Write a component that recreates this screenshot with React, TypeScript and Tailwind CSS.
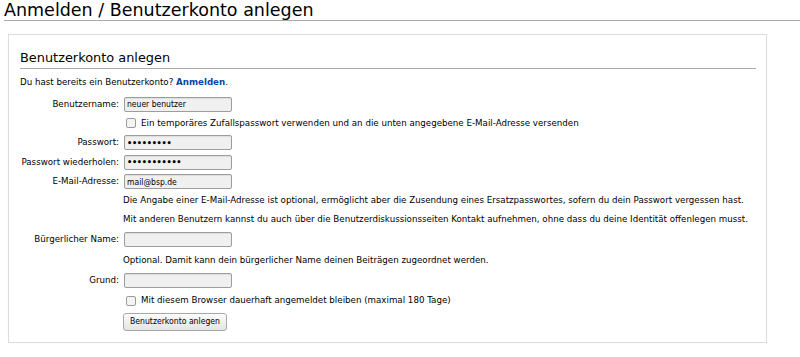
import React from "react";

const font = { fontFamily: '"DejaVu Sans", Verdana, sans-serif' };

function Label({ children }: { children?: React.ReactNode }) {
  return <div className="w-[99px] shrink-0 text-right pr-0 leading-[11px]">{children}</div>;
}

function Input({ value, password }: { value?: string; password?: boolean }) {
  return (
    <div className="ml-[5px] w-[108px] h-[15px] border border-[#9d9d9d] rounded-[2px] bg-[#f0f0f0] flex items-center pl-[2px] overflow-hidden shadow-[inset_0_1px_1px_rgba(0,0,0,0.08)]">
      {password ? (
        <span className="text-[8.2px] leading-none tracking-[-0.3px] font-bold text-black" style={font}>
          {value}
        </span>
      ) : (
        <span className="text-[8.5px] leading-none text-black" style={{ fontFamily: '"DejaVu Sans Condensed", "Liberation Sans", sans-serif' }}>
          {value}
        </span>
      )}
    </div>
  );
}

function Checkbox() {
  return <span className="inline-block w-[10px] h-[10px] border border-[#9a9a9a] rounded-[2px] bg-[#f4f4f4] shrink-0" />;
}

export default function App() {
  return (
    <div className="w-[800px] h-[357px] bg-white text-black overflow-hidden" style={font}>
      <div className="ml-[4px] h-[20px] leading-[20px] text-[17.5px] border-b border-[#aaaaaa] box-content">
        Anmelden / Benutzerkonto anlegen
      </div>
      <div className="ml-[8px] mt-[13px] w-[759px] h-[309px] border border-[#dcdcdc] shadow-[0_0_1px_rgba(0,0,0,0.05)] pl-[11px] pr-[10px] pt-[15px] text-[8.7px]">
        <div className="h-[16px] leading-[16px] text-[12.9px] pb-[2px] border-b border-[#aaaaaa] box-content">
          Benutzerkonto anlegen
        </div>
        <div className="mt-[7.5px] h-[11px] leading-[11px]">
          Du hast bereits ein Benutzerkonto?{" "}
          <span className="font-bold text-[#0645ad]">Anmelden</span>.
        </div>
        <div className="mt-[7px] flex flex-col">
          <div className="h-[19px] flex items-center">
            <Label>Benutzername:</Label>
            <Input value="neuer benutzer" />
          </div>
          <div className="h-[19.5px] flex items-center">
            <Label />
            <div className="ml-[7px] flex items-center">
              <Checkbox />
              <span className="ml-[5px] leading-[11px]">
                Ein temporäres Zufallspasswort verwenden und an die unten angegebene E-Mail-Adresse versenden
              </span>
            </div>
          </div>
          <div className="h-[19.5px] flex items-center">
            <Label>Passwort:</Label>
            <Input password value="•••••••••" />
          </div>
          <div className="h-[19.5px] flex items-center">
            <Label>Passwort wiederholen:</Label>
            <Input password value="•••••••••••" />
          </div>
          <div className="h-[19.5px] flex items-center">
            <Label>E-Mail-Adresse:</Label>
            <Input value="mail@bsp.de" />
          </div>
          <div className="h-[18.5px] flex items-center">
            <Label />
            <span className="ml-[4px] leading-[11px]">
              Die Angabe einer E-Mail-Adresse ist optional, ermöglicht aber die Zusendung eines Ersatzpasswortes, sofern du dein Passwort vergessen hast.
            </span>
          </div>
          <div className="h-[19.5px] flex items-center">
            <Label />
            <span className="ml-[4px] leading-[11px]">
              Mit anderen Benutzern kannst du auch über die Benutzerdiskussionsseiten Kontakt aufnehmen, ohne dass du deine Identität offenlegen musst.
            </span>
          </div>
          <div className="h-[20.5px] flex items-center">
            <Label>Bürgerlicher Name:</Label>
            <Input value="" />
          </div>
          <div className="h-[20px] flex items-center">
            <Label />
            <span className="ml-[4px] leading-[11px]">
              Optional. Damit kann dein bürgerlicher Name deinen Beiträgen zugeordnet werden.
            </span>
          </div>
          <div className="h-[20.5px] flex items-center">
            <Label>Grund:</Label>
            <Input value="" />
          </div>
          <div className="h-[20.5px] flex items-center">
            <Label />
            <div className="ml-[7px] flex items-center">
              <Checkbox />
              <span className="ml-[5px] leading-[11px]">
                Mit diesem Browser dauerhaft angemeldet bleiben (maximal 180 Tage)
              </span>
            </div>
          </div>
          <div className="h-[21.5px] flex items-center">
            <Label />
            <div
              className="ml-[4px] w-[104px] h-[18px] border border-[#a8a8a8] rounded-[3px] bg-gradient-to-b from-[#fcfcfc] to-[#e4e4e4] flex items-center justify-center text-[8.6px]"
              style={{ fontFamily: '"DejaVu Sans Condensed", "Liberation Sans", sans-serif' }}
            >
              Benutzerkonto anlegen
            </div>
          </div>
        </div>
      </div>
    </div>
  );
}
